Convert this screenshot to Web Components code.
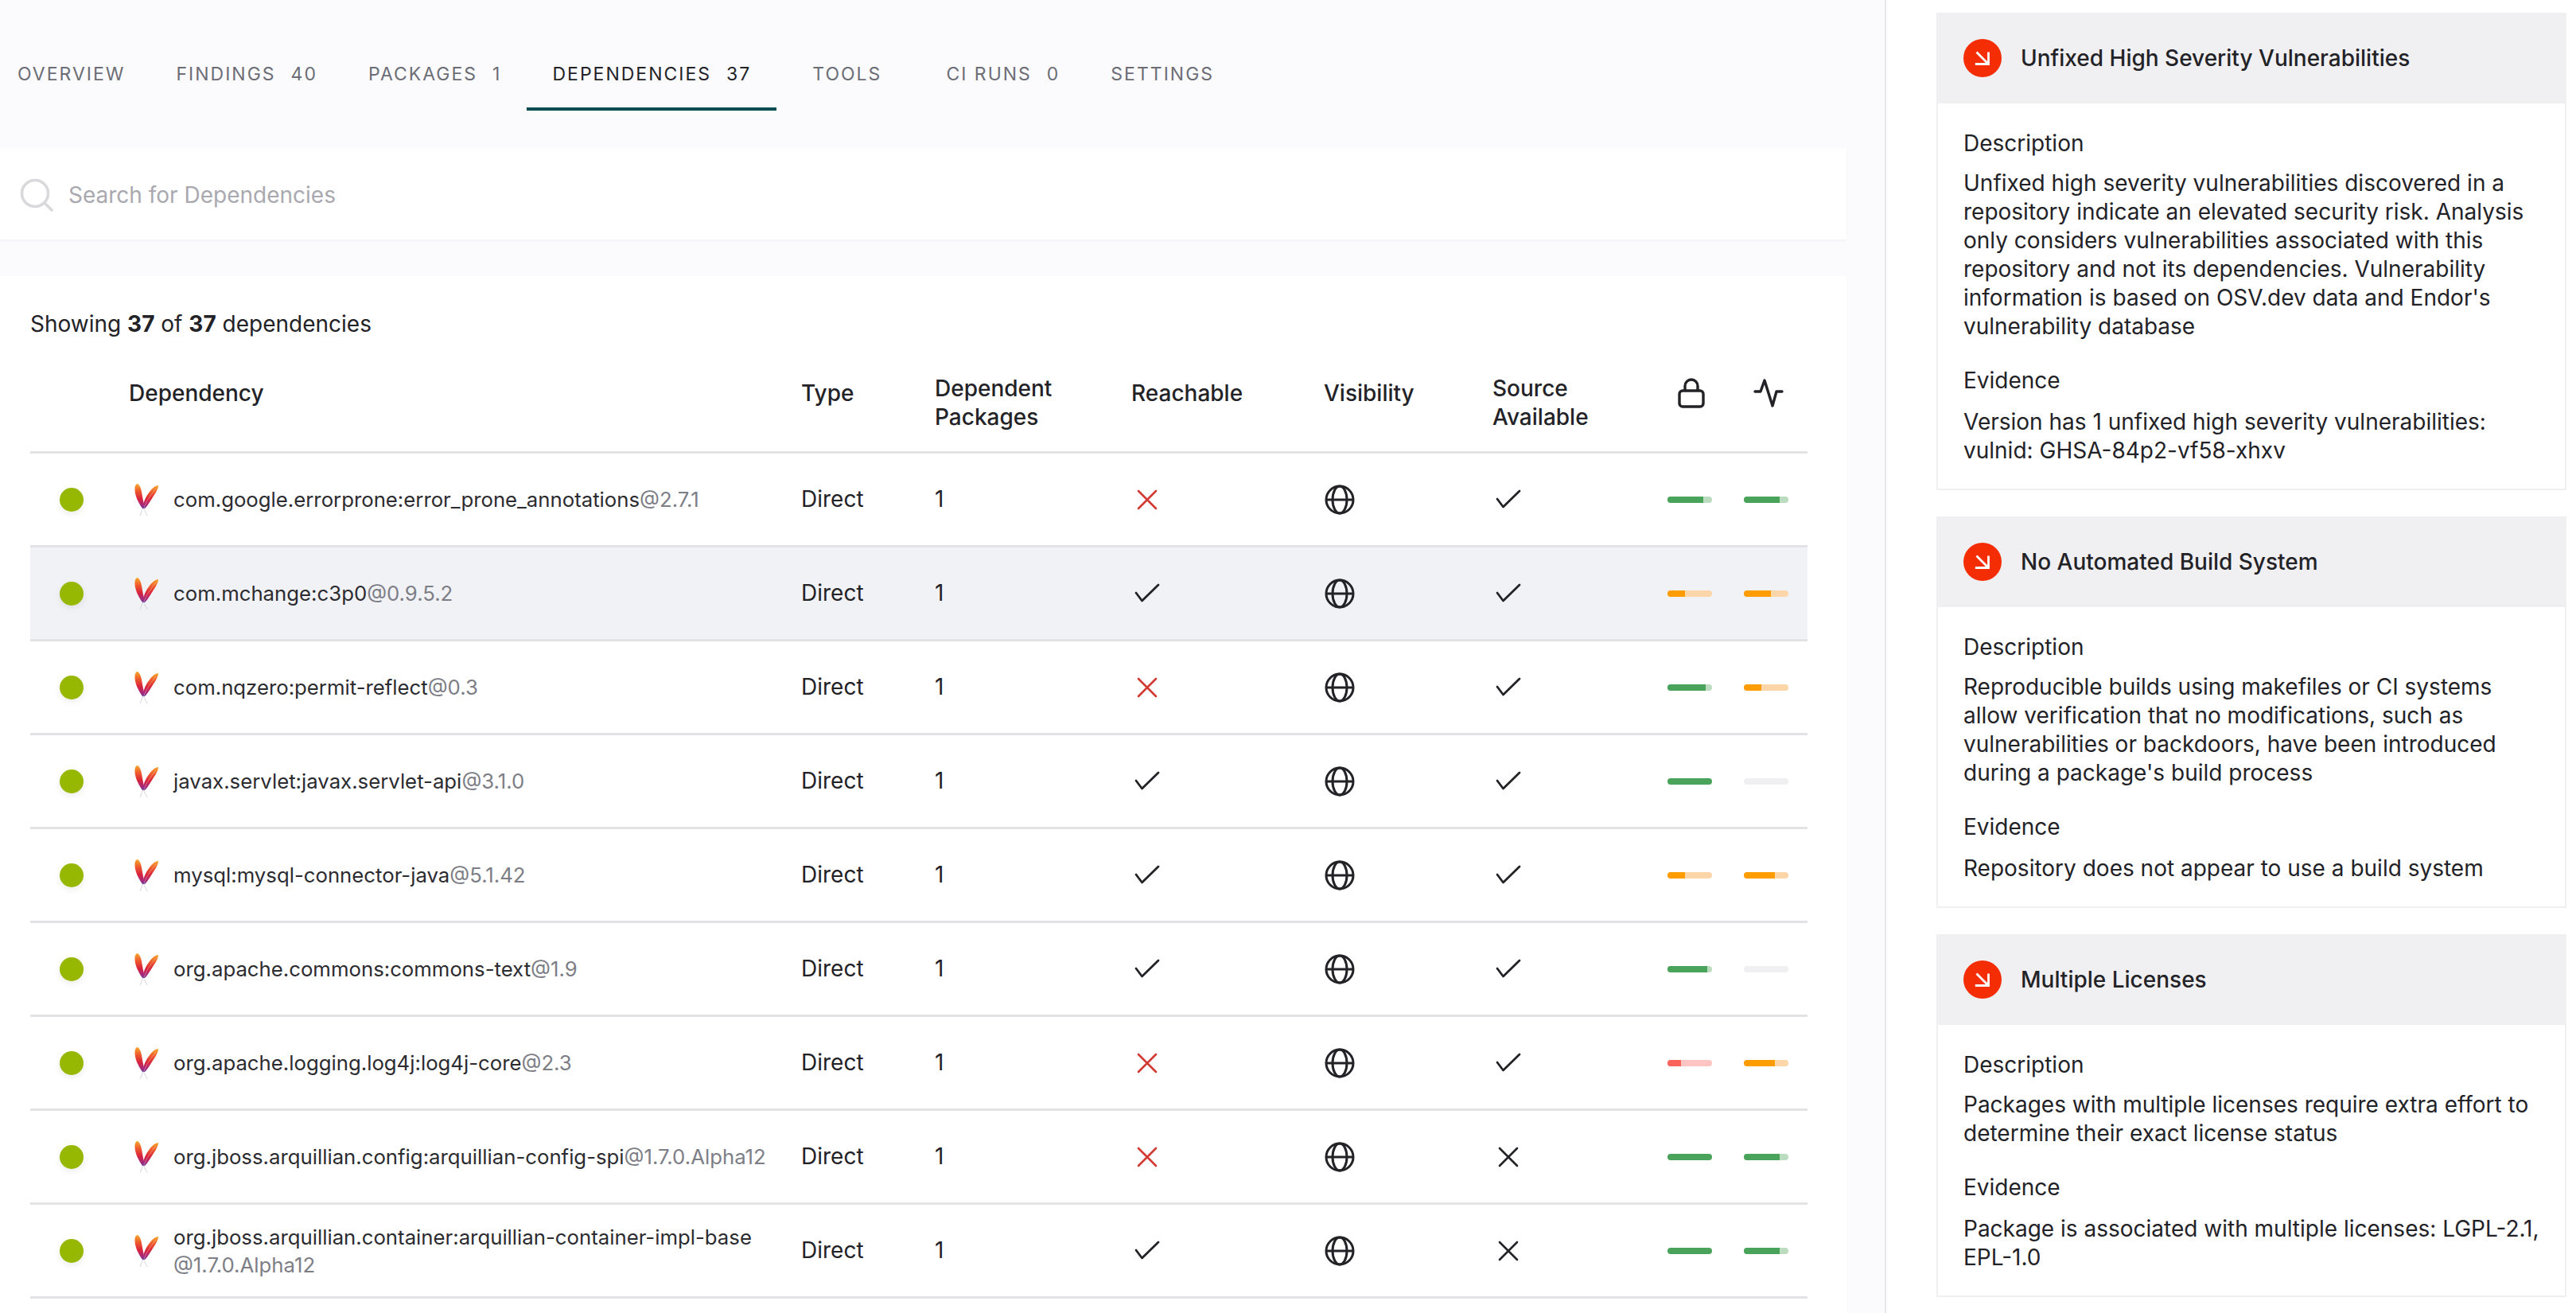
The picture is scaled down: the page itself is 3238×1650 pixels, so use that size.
<!DOCTYPE html>
<html>
<head>
<meta charset="utf-8">
<title>Dependencies</title>
<style>
  html, body { margin: 0; height: 100%; }
  body {
    width: 3238px;
    height: 1650px;
    overflow: hidden;
    background: #fbfbfe;
    color: #222227;
    font-family: Inter, "Liberation Sans", sans-serif;
    font-size: 28px;
    display: flex;
  }
</style>
</head>
<body>
  <main-panel>
    <tab-bar>
      <tab-item>OVERVIEW</tab-item>
      <tab-item count="40">FINDINGS</tab-item>
      <tab-item count="1">PACKAGES</tab-item>
      <tab-item count="37" active>DEPENDENCIES</tab-item>
      <tab-item spaced>TOOLS</tab-item>
      <tab-item count="0">CI RUNS</tab-item>
      <tab-item>SETTINGS</tab-item>
    </tab-bar>
    <search-box>Search for Dependencies</search-box>
    <dep-table>
      <span slot="summary">Showing <b>37</b> of <b>37</b> dependencies</span>
      <dep-row reach="no" source="yes" sec="green 80" act="green 80">com.google.errorprone:error_prone_annotations<span slot="version">@2.7.1</span></dep-row>
      <dep-row hover reach="yes" source="yes" sec="orange 40" act="orange 60">com.mchange:c3p0<span slot="version">@0.9.5.2</span></dep-row>
      <dep-row reach="no" source="yes" sec="green 85" act="orange 40">com.nqzero:permit-reflect<span slot="version">@0.3</span></dep-row>
      <dep-row reach="yes" source="yes" sec="green 100" act="empty 0">javax.servlet:javax.servlet-api<span slot="version">@3.1.0</span></dep-row>
      <dep-row reach="yes" source="yes" sec="orange 40" act="orange 70">mysql:mysql-connector-java<span slot="version">@5.1.42</span></dep-row>
      <dep-row reach="yes" source="yes" sec="green 90" act="empty 0">org.apache.commons:commons-text<span slot="version">@1.9</span></dep-row>
      <dep-row reach="no" source="yes" sec="red 30" act="orange 70">org.apache.logging.log4j:log4j-core<span slot="version">@2.3</span></dep-row>
      <dep-row reach="no" source="no" sec="green 100" act="green 80">org.jboss.arquillian.config:arquillian-config-spi<span slot="version">@1.7.0.Alpha12</span></dep-row>
      <dep-row reach="yes" source="no" sec="green 100" act="green 80">org.jboss.arquillian.container:arquillian-container-impl-base<span slot="version">@1.7.0.Alpha12</span></dep-row>
    </dep-table>
  </main-panel>
  <side-panel>
    <finding-card title="Unfixed High Severity Vulnerabilities">
      <span slot="description">Unfixed high severity vulnerabilities discovered in a repository indicate an elevated security risk. Analysis only considers vulnerabilities associated with this repository and not its dependencies. Vulnerability information is based on OSV.dev data and Endor's vulnerability database</span>
      <span slot="evidence">Version has 1 unfixed high severity vulnerabilities: vulnid: GHSA-84p2-vf58-xhxv</span>
    </finding-card>
    <finding-card title="No Automated Build System">
      <span slot="description">Reproducible builds using makefiles or CI systems allow verification that no modifications, such as vulnerabilities or backdoors, have been introduced during a package's build process</span>
      <span slot="evidence">Repository does not appear to use a build system</span>
    </finding-card>
    <finding-card title="Multiple Licenses">
      <span slot="description">Packages with multiple licenses require extra effort to determine their exact license status</span>
      <span slot="evidence">Package is associated with multiple licenses: LGPL-2.1, EPL-1.0</span>
    </finding-card>
  </side-panel>

<script>
// shared icons, stroke icons use currentColor
const ICONS = {
  check: `<svg width="40" height="40" viewBox="0 0 40 40" fill="none" stroke="currentColor" stroke-width="2.8" stroke-linecap="round" stroke-linejoin="round"><path d="M6 19l7.500 10L34 9"/></svg>`,
  cross: `<svg width="40" height="40" viewBox="0 0 40 40" fill="none" stroke="currentColor" stroke-width="2.6" stroke-linecap="round"><path d="M9 9l22 22M31 9L9 31"/></svg>`,
  globe: `<svg width="40" height="40" viewBox="0 0 40 40" fill="none" stroke="currentColor" stroke-width="3"><circle cx="20" cy="20" r="17"/><path d="M3 20h34"/><ellipse cx="20" cy="20" rx="9" ry="17"/></svg>`,
  lock: `<svg width="34" height="38" viewBox="0 0 34 38" fill="none" stroke="currentColor" stroke-width="3.4" stroke-linejoin="round"><rect x="2" y="16" width="30" height="20" rx="4"/><path d="M9 16V10a8 8 0 0 1 16 0v6"/></svg>`,
  activity: `<svg width="38" height="36" viewBox="0 0 38 36" fill="none" stroke="currentColor" stroke-width="3.4" stroke-linecap="round" stroke-linejoin="round"><path d="M2 16h7l5-14 10 32 5-18h7"/></svg>`,
  search: `<svg width="42" height="42" viewBox="0 0 42 42" fill="none" stroke="currentColor" stroke-width="3.6" stroke-linecap="round"><circle cx="19" cy="19" r="16.500"/><path d="M31 31l9 9"/></svg>`,
  arrow: `<svg width="20" height="20" viewBox="0 0 24 24" fill="none" stroke="#fff" stroke-width="3.4"><path d="M3 3l17 17M1 21h20V3"/></svg>`
};

const FEATHER_COUNT = { n: 0 };
function feather() {
  const id = 'fg' + (FEATHER_COUNT.n++);
  return `<svg width="31" height="40" viewBox="0 0 31 40">
    <defs><linearGradient id="${id}" x1="0" y1="0" x2="0" y2="1">
      <stop offset="0" stop-color="#f9a82c"/><stop offset=".3" stop-color="#ee5a2d"/>
      <stop offset=".6" stop-color="#d9253a"/><stop offset=".85" stop-color="#a8287a"/><stop offset="1" stop-color="#6d3a94"/></linearGradient></defs>
    <path d="M11 30L7 40M11 30l5 10" stroke="#c9c9d2" stroke-width=".8" fill="none"/>
    <path fill="url(#${id})" d="M3 0C6 0 8 5 9 10c1 6 2 12 4 20l-3 1C5 24 0 14 .5 6 .5 3 1.500 1 3 0z"/>
    <path fill="url(#${id})" d="M30 2c0 5-5 12-9 18-3 5-6 9-8 11l-3-1c1-6 4-14 9-20 3-4 7-8 11-8z"/>
    <path d="M27 6C21 13 15 22 12 30" stroke="#ffe6d2" stroke-opacity=".55" stroke-width=".7" fill="none"/>
  </svg>`;
}

class TabBar extends HTMLElement {
  constructor() {
    super();
    this.attachShadow({ mode: 'open' }).innerHTML = `
      <style>:host { display: flex; height: 187px; margin-left: -10px; align-items: flex-start; padding-top: 47px; box-sizing: border-box; }</style>
      <slot></slot>`;
  }
}

class TabItem extends HTMLElement {
  connectedCallback() {
    const count = this.getAttribute('count');
    const shadow = this.shadowRoot || this.attachShadow({ mode: 'open' });
    shadow.innerHTML = `
      <style>
        :host { display: flex; gap: 19px; height: 92px; box-sizing: border-box; padding: 33px 32px 0; font-size: 23px; line-height: 26px; letter-spacing: 2px; color: #6c6d75; border-bottom: 4px solid transparent; white-space: nowrap; }
        :host([active]) { color: #222227; border-bottom-color: #004c54; }
        :host([spaced]) { margin: 0 17px 0 13px; }
      </style>
      <slot></slot>${count !== null ? `<span>${count}</span>` : ''}`;
  }
}

class SearchBox extends HTMLElement {
  constructor() {
    super();
    this.attachShadow({ mode: 'open' }).innerHTML = `
      <style>
        :host { display: flex; align-items: center; gap: 19px; height: 114px; box-sizing: border-box; padding: 2px 0 0 25px; background: #fff; box-shadow: 0 2px 2px #f3f3f6; color: #a9a9af; }
        .icon { color: #d9d9dd; display: flex; }
      </style>
      <span class="icon">${ICONS.search}</span><slot></slot>`;
  }
}

class DepTable extends HTMLElement {
  constructor() {
    super();
    this.attachShadow({ mode: 'open' }).innerHTML = `
      <style>
        :host { display: block; flex: 1; margin-top: 46px; padding: 42px 49px 0 38px; background: #fff; }
        .summary { height: 36px; line-height: 36px; margin-bottom: 17px; }
        .head { display: grid; grid-template-columns: var(--cols); height: 104px; padding-bottom: 21px; align-items: center; font-weight: 500; line-height: 36px; border-bottom: 3px solid #e3e3e6; }
        .two { margin-top: 23px; }
        .icon { display: flex; }
        .lock { margin-left: 13px; }
        .activity { margin-left: 12px; }
      </style>
      <div class="summary"><slot name="summary"></slot></div>
      <div class="head">
        <span></span><span>Dependency</span><span>Type</span><span class="two">Dependent<br>Packages</span><span>Reachable</span><span>Visibility</span><span class="two">Source<br>Available</span>
        <span class="icon lock">${ICONS.lock}</span><span class="icon activity">${ICONS.activity}</span>
      </div>
      <slot></slot>`;
    this.style.setProperty('--cols', '124px 845px 168px 247px 242px 212px 220px 96px 1fr');
  }
}

class DepRow extends HTMLElement {
  connectedCallback() {
    const reach = this.getAttribute('reach') === 'yes';
    const source = this.getAttribute('source') === 'yes';
    const shadow = this.shadowRoot || this.attachShadow({ mode: 'open' });
    shadow.innerHTML = `
      <style>
        :host { display: grid; grid-template-columns: var(--cols); height: 115px; align-items: center; border-bottom: 3px solid #e3e3e6; }
        :host([hover]) { background: #f1f2f6; }
        .dot { width: 30px; height: 30px; border-radius: 50%; background: #97b802; margin-left: 37px; box-shadow: 0 3px 9px rgba(0,0,0,.08); }
        .name { display: flex; gap: 18px; margin-left: 7px; align-items: center; }
        .logo { display: flex; flex: none; }
        .text { display: flex; flex-wrap: wrap; width: 770px; font-size: 25.75px; line-height: 35px; color: #2b2b30; }
        .text > span { white-space: nowrap; }
        ::slotted(span) { color: #7d7e86; }
        .plain { padding-bottom: 2px; }
        .cell { display: flex; }
        .no { color: #d23b33; }
      </style>
      <span class="dot"></span>
      <div class="name"><span class="logo">${feather()}</span><div class="text"><span><slot></slot></span><span><slot name="version"></slot></span></div></div>
      <span class="plain">Direct</span>
      <span class="plain">1</span>
      <span class="cell ${reach ? '' : 'no'}">${reach ? ICONS.check : ICONS.cross}</span>
      <span class="cell">${ICONS.globe}</span>
      <span class="cell">${source ? ICONS.check : ICONS.cross}</span>
      <score-bar value="${this.getAttribute('sec')}"></score-bar>
      <score-bar value="${this.getAttribute('act')}"></score-bar>`;
  }
}

class ScoreBar extends HTMLElement {
  connectedCallback() {
    const [tone, pct] = this.getAttribute('value').split(' ');
    const tones = {
      green: ['#4aa35a', '#bcdcc0'],
      orange: ['#ff9c00', '#fcd5a8'],
      red: ['#f9635a', '#fdc4c2'],
      empty: ['#f0f0f2', '#f0f0f2']
    };
    const [fg, bg] = tones[tone];
    const shadow = this.shadowRoot || this.attachShadow({ mode: 'open' });
    shadow.innerHTML = `
      <style>
        :host { display: block; width: 56px; height: 8px; border-radius: 4px; overflow: hidden; background: ${bg}; }
        div { height: 100%; width: ${pct}%; background: ${fg}; }
      </style><div></div>`;
  }
}

class MainPanel extends HTMLElement {
  constructor() {
    super();
    this.attachShadow({ mode: 'open' }).innerHTML = `
      <style>:host { display: flex; flex-direction: column; width: 2321px; height: 1650px; margin-right: 48px; flex: none; }</style>
      <slot></slot>`;
  }
}

class SidePanel extends HTMLElement {
  constructor() {
    super();
    this.attachShadow({ mode: 'open' }).innerHTML = `
      <style>:host { display: flex; flex-direction: column; gap: 33px; flex: 1; box-sizing: border-box; height: 1650px; padding: 16px 12px 0 63px; background: #fff; border-left: 2px solid #e6e6ec; overflow: hidden; }</style>
      <slot></slot>`;
  }
}

class FindingCard extends HTMLElement {
  connectedCallback() {
    const shadow = this.shadowRoot || this.attachShadow({ mode: 'open' });
    shadow.innerHTML = `
      <style>
        :host { display: block; flex: none; border: 2px solid #f0f0f2; border-top: 0; line-height: 36px; }
        header { display: flex; align-items: center; gap: 24px; height: 114px; box-sizing: border-box; padding-left: 34px; margin: 0 -2px; background: #f0eff2; font-weight: 500; }
        .badge { width: 48px; height: 48px; border-radius: 50%; background: #f52d05; display: flex; align-items: center; justify-content: center; }
        .body { padding: 32px 32px 30px; }
        h4 { margin: 0 0 14px; font: inherit; font-weight: 400; }
        h4.ev { margin-bottom: 16px; }
        p { margin: 0 0 32px; }
        p:last-child { margin: 0; }
      </style>
      <header><span class="badge">${ICONS.arrow}</span><span>${this.getAttribute('title')}</span></header>
      <div class="body">
        <h4>Description</h4><p><slot name="description"></slot></p>
        <h4 class="ev">Evidence</h4><p><slot name="evidence"></slot></p>
      </div>`;
  }
}

customElements.define('tab-bar', TabBar);
customElements.define('tab-item', TabItem);
customElements.define('search-box', SearchBox);
customElements.define('dep-table', DepTable);
customElements.define('dep-row', DepRow);
customElements.define('score-bar', ScoreBar);
customElements.define('main-panel', MainPanel);
customElements.define('side-panel', SidePanel);
customElements.define('finding-card', FindingCard);
</script>
</body>
</html>
